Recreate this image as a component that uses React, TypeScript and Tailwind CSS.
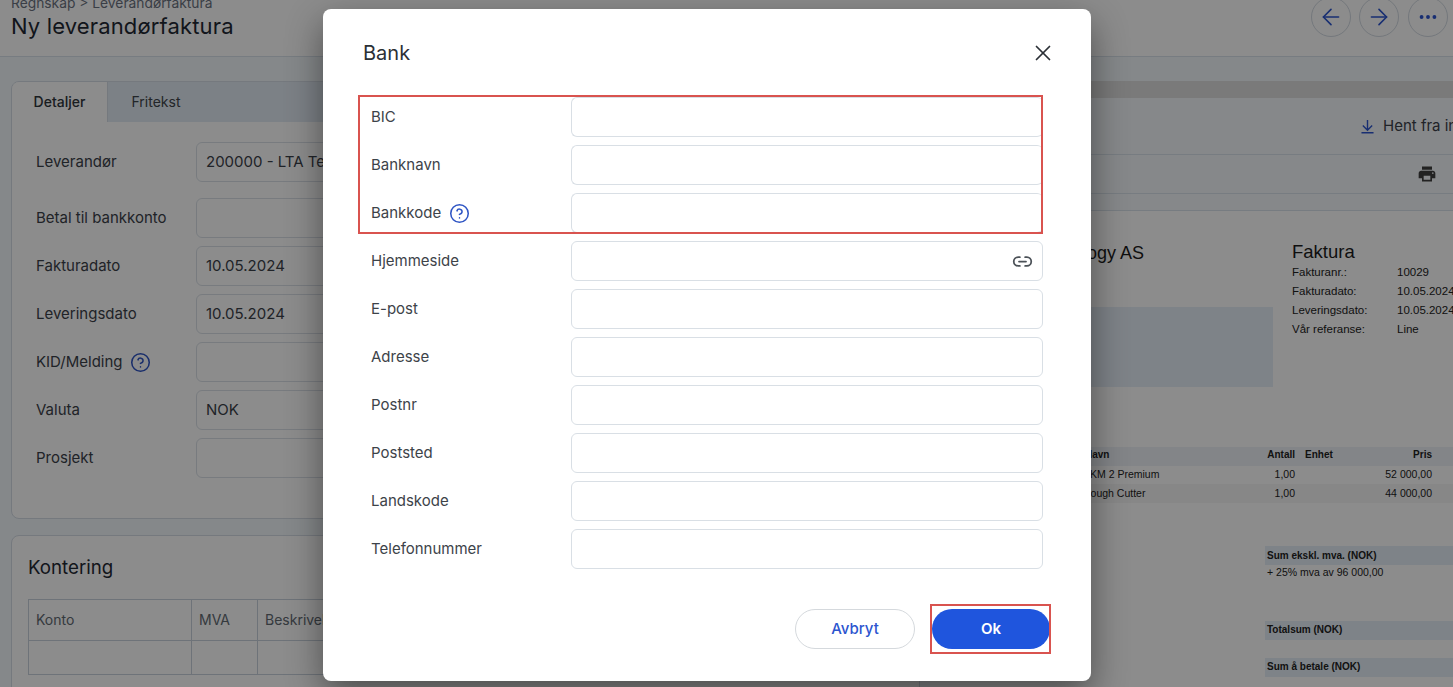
import { ArrowLeft, ArrowRight, Ellipsis, X, CircleHelp, Link2 } from "lucide-react";
import { MdPrint } from "react-icons/md";

const font = "font-['Inter',sans-serif]";

function BackField({ label, value, help, className = "" }: { label: string; value?: string; help?: boolean; className?: string }) {
  return (
    <div className={`flex h-10 items-center ${className}`}>
      <div className="flex w-[160px] shrink-0 items-center gap-[7px] text-[15px] text-[#3b4149]">
        <span>{label}</span>
        {help && <CircleHelp className="h-[21px] w-[21px] text-[#2f55c4]" strokeWidth={1.75} />}
      </div>
      <div className="flex h-10 w-[260px] items-center rounded-md border border-[#dbe1e8] bg-white pl-[9px] text-[15px] text-[#3b4149] whitespace-nowrap">
        {value}
      </div>
    </div>
  );
}

function DialogField({ label, help, icon, cut }: { label: string; help?: boolean; icon?: boolean; cut?: boolean }) {
  return (
    <div className="flex h-10 items-center">
      <div className="flex w-[200px] shrink-0 items-center gap-[8px] text-[15px] text-[#3d4349]">
        <span>{label}</span>
        {help && <CircleHelp className="h-[21px] w-[21px] text-[#2f55c4]" strokeWidth={1.75} />}
      </div>
      <div className={`flex h-10 flex-1 items-center justify-end rounded-md border border-[#d9dfe5] bg-white pr-[9px] ${cut ? "border-r-0" : ""}`}>
        {icon && <Link2 className="h-[21px] w-[21px] text-[#4b5157]" strokeWidth={2} />}
      </div>
    </div>
  );
}

function DocRow({ label, value }: { label: string; value: string }) {
  return (
    <div className="flex h-[19px] items-center text-[11.5px] text-[#222]">
      <span className="w-[105px] shrink-0">{label}</span>
      <span className="whitespace-nowrap">{value}</span>
    </div>
  );
}

function LineRow({ name, price, className }: { name: string; price: string; className: string }) {
  return (
    <div className={`flex items-center pl-[153px] ${className}`}>
      <span className="w-[162px] whitespace-nowrap">{name}</span>
      <span className="w-[50px] text-right">1,00</span>
      <span className="ml-[10px] w-[50px]" />
      <span className="w-[77px] text-right">{price}</span>
    </div>
  );
}

export default function App() {
  return (
    <div className={`relative h-[687px] w-[1453px] overflow-hidden bg-[#f3f7fb] ${font}`}>
      {/* Page behind the dialog */}
      <header className="flex h-[57px] justify-between border-b border-[#d9e2ec] bg-white pl-[11px] pr-[5px]">
        <div className="-mt-[5px]">
          <div className="text-[13.8px] leading-[16px] text-[#6b7280]">Regnskap &gt; Leverandørfaktura</div>
          <h1 className="text-[22px] leading-[30px] tracking-[0.15px] text-[#1f2933]">Ny leverandørfaktura</h1>
        </div>
        <div className="-mt-[3px] flex gap-[8px]">
          {[ArrowLeft, ArrowRight].map((I, i) => (
            <div key={i} className="flex h-[40px] w-[40px] items-center justify-center rounded-full border border-[#d3dae2] bg-white">
              <I className="h-[26px] w-[26px] text-[#2c55cf]" strokeWidth={1.5} />
            </div>
          ))}
          <div className="ml-[1px] flex h-[40px] w-[40px] items-center justify-center rounded-full border border-[#d3dae2] bg-white">
            <Ellipsis className="h-[22px] w-[22px] text-[#2c55cf]" strokeWidth={2.2} />
          </div>
        </div>
      </header>

      <div className="flex items-start">
        {/* Left column */}
        <div className="flex w-[930px] shrink-0 flex-col gap-[16px] pl-[11px] pr-[10px] pt-[24px]">
          <section className="h-[438px] overflow-hidden rounded-lg border border-[#d5dde6] bg-white">
            <div className="flex h-[40px] bg-[#e2ebf4] text-[14px]">
              <div className="flex w-[96px] items-center justify-center border-r border-[#d5dde6] bg-white pb-[2px] font-medium text-[#2f353b]">Detaljer</div>
              <div className="flex w-[96px] items-center justify-center pb-[2px] text-[#3f454b]">Fritekst</div>
            </div>
            <div className="flex flex-col gap-[8px] pl-[24px] pt-[20px]">
              <BackField label="Leverandør" value="200000 - LTA Technology AS" className="mb-[8px]" />
              <BackField label="Betal til bankkonto" />
              <BackField label="Fakturadato" value="10.05.2024" />
              <BackField label="Leveringsdato" value="10.05.2024" />
              <BackField label="KID/Melding" help />
              <BackField label="Valuta" value="NOK" />
              <BackField label="Prosjekt" />
            </div>
          </section>
          <section className="h-[200px] rounded-lg border border-[#d5dde6] bg-white px-[16px] pt-[20px]">
            <h2 className="text-[18.7px] leading-[24px] text-[#1f2933]">Kontering</h2>
            <div className="mt-[19px] border border-[#c9d2dc] text-[14px] text-[#626a72]">
              <div className="grid h-[41px] grid-cols-[163px_66px_1fr] border-b border-[#c9d2dc]">
                <div className="flex items-center border-r border-[#c9d2dc] pb-[1px] pl-[7px]">Konto</div>
                <div className="flex items-center border-r border-[#c9d2dc] pb-[1px] pl-[7px]">MVA</div>
                <div className="flex items-center pb-[1px] pl-[7px]">Beskrivelse</div>
              </div>
              <div className="grid h-[33px] grid-cols-[163px_66px_1fr]">
                <div className="border-r border-[#c9d2dc]" />
                <div className="border-r border-[#c9d2dc]" />
                <div />
              </div>
            </div>
          </section>
        </div>

        {/* Right column */}
        <div className="mt-[24px] w-[523px] shrink-0">
          <div className="h-[17px] bg-[#dedede]" />
          <div className="flex h-[57px] items-center gap-[9px] overflow-hidden whitespace-nowrap border-b border-[#d9e2ec] bg-[#f5f8fb] pl-[431px]">
            <svg viewBox="0 0 14 15" className="h-[15px] w-[13px] shrink-0 fill-none stroke-[#2c55cf] stroke-[1.5]">
              <path d="M7 0.5V11M2 6.5l5 5 5-5M0.5 14.2h13" />
            </svg>
            <span className="text-[15px] text-[#3b4149]">Hent fra innboks</span>
          </div>
          <div className="flex h-[39px] items-center justify-end border-b border-[#d9e2ec] bg-[#f5f8fb] pr-[16px]">
            <MdPrint className="h-[20px] w-[20px] text-[#3f3f3f]" />
          </div>
          <div className="h-[17px] border-b border-[#d9e2ec] bg-[#f5f8fb]" />
          <div className="h-[500px] bg-white pt-[30px] font-['Liberation_Sans',sans-serif] text-[#222]">
            <div className="flex">
              <div className="w-[343px] shrink-0 pl-[61px]">
                <div className="text-[18px] leading-[24px] text-[#1c1c1c]">LTA Technology AS</div>
                <div className="mt-[42px] h-[80px] bg-[#e6eff7]" />
              </div>
              <div className="ml-[19px] min-w-0 flex-1">
                <div className="text-[18.5px] leading-[22px] text-[#1c1c1c]">Faktura</div>
                <DocRow label="Fakturanr.:" value="10029" />
                <DocRow label="Fakturadato:" value="10.05.2024" />
                <DocRow label="Leveringsdato:" value="10.05.2024" />
                <DocRow label="Vår referanse:" value="Line" />
              </div>
            </div>
            <div className="mt-[60px] text-[10.5px]">
              <div className="flex h-[19px] items-center bg-[#eef3f8] pb-[4px] pl-[155px] text-[10px] font-bold">
                <span className="w-[160px]">Navn</span>
                <span className="w-[50px] text-right">Antall</span>
                <span className="ml-[10px] w-[50px]">Enhet</span>
                <span className="w-[77px] text-right">Pris</span>
              </div>
              <LineRow name="AKM 2 Premium" price="52 000,00" className="h-[18px] pb-[1px]" />
              <LineRow name="Dough Cutter" price="44 000,00" className="h-[19px] bg-[#f6f6f6]" />
            </div>
            <div className="ml-[335px] text-[10px]">
              <div className="mt-[43px] flex h-[19px] items-center bg-[#e6eff7] pb-[1px] pl-[2px] font-bold">Sum ekskl. mva. (NOK)</div>
              <div className="flex h-[15px] items-center pl-[2px] text-[10.5px]">+ 25% mva av 96 000,00</div>
              <div className="mt-[41px] flex h-[19px] items-center bg-[#e6eff7] pb-[3px] pl-[2px] font-bold">Totalsum (NOK)</div>
              <div className="mt-[18px] flex h-[19px] items-center bg-[#e6eff7] pb-[3px] pl-[2px] font-bold">Sum å betale (NOK)</div>
            </div>
          </div>
        </div>
      </div>

      {/* Dim layer */}
      <div className="absolute inset-0 bg-black/45" />

      {/* Dialog */}
      <div className="absolute left-[323px] top-[9px] flex h-[672px] w-[768px] flex-col rounded-lg bg-white px-[40px] shadow-[0_14px_36px_rgba(0,0,0,0.45)]">
        <div className="flex h-[88px] shrink-0 items-center justify-between">
          <h2 className="text-[20px] text-[#2b3036]">Bank</h2>
          <X className="-mr-[5px] h-[26px] w-[26px] text-[#2b3036]" strokeWidth={1.6} />
        </div>
        <div className="flex flex-col gap-[8px] px-[8px]">
          <DialogField label="BIC" cut />
          <DialogField label="Banknavn" cut />
          <DialogField label="Bankkode" help cut />
          <DialogField label="Hjemmeside" icon />
          <DialogField label="E-post" />
          <DialogField label="Adresse" />
          <DialogField label="Postnr" />
          <DialogField label="Poststed" />
          <DialogField label="Landskode" />
          <DialogField label="Telefonnummer" />
        </div>
        <div className="mr-[1px] mt-[40px] flex justify-end gap-[17px]">
          <button className="h-10 w-[120px] rounded-full border border-[#d5d9dd] bg-white text-[15px] font-medium text-[#2c55cf]">Avbryt</button>
          <button className="h-10 w-[118px] rounded-full bg-[#1f55dd] text-[15px] font-semibold text-white">Ok</button>
        </div>

        {/* Annotation rectangles */}
        <div className="absolute left-[35px] top-[86px] h-[139px] w-[685px] border-2 border-[#d9534f]" />
        <div className="absolute left-[607px] top-[595px] h-[50px] w-[121px] border-2 border-[#d9534f]" />
      </div>
    </div>
  );
}
